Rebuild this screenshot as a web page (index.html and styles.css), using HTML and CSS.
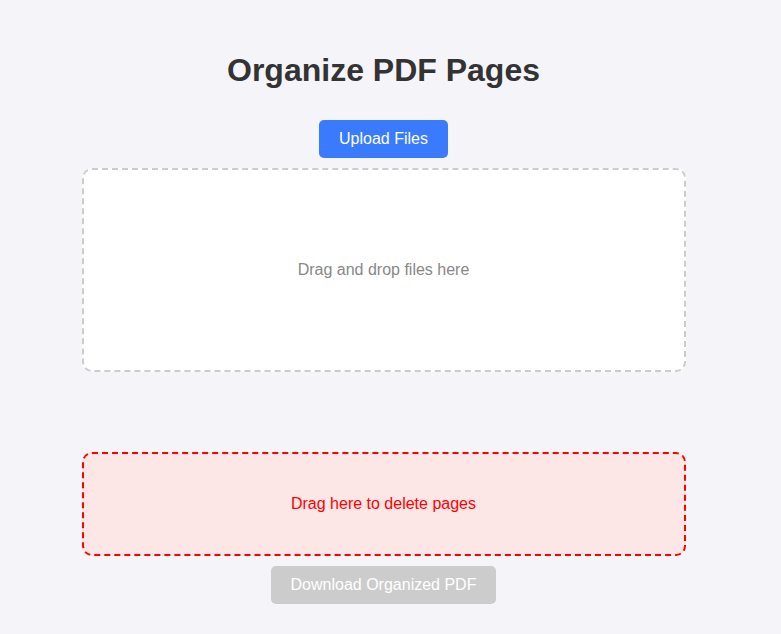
FILE: index.html
```html
<!DOCTYPE html>
<html lang="en">
<head>
<meta charset="utf-8">
<title>Organize PDF Pages</title>
<link rel="stylesheet" href="styles.css">
</head>
<body>
<main class="app">
  <h1 class="title">Organize PDF Pages</h1>
  <button class="btn btn-upload" type="button">Upload Files</button>
  <div class="drop-zone">Drag and drop files here</div>
  <div class="pages"></div>
  <div class="delete-zone">Drag here to delete pages</div>
  <button class="btn btn-download" type="button" disabled>Download Organized PDF</button>
</main>
</body>
</html>
```
FILE: styles.css
```css
html, body {
  margin: 0;
  padding: 0;
}
body {
  background: #f4f4f9;
  font-family: "Liberation Sans", Arial, sans-serif;
  color: #333;
}
.app {
  display: flex;
  flex-direction: column;
  align-items: center;
  padding-right: 14px;
}
.title {
  margin: 52px 0 31px;
  font-size: 32px;
  line-height: 37px;
  font-weight: bold;
  color: #333;
}
.btn {
  font-family: inherit;
  font-size: 16px;
  line-height: 18px;
  padding: 10px 20px;
  border: none;
  border-radius: 5px;
  color: #fff;
}
.btn-upload {
  background: #3a7bfd;
  margin-bottom: 10px;
}
.drop-zone {
  box-sizing: border-box;
  width: 604px;
  height: 204px;
  border: 2px dashed #ccc;
  border-radius: 10px;
  background: #fff;
  color: #888;
  font-size: 16px;
  display: flex;
  align-items: center;
  justify-content: center;
}
.pages {
  height: 80px;
}
.delete-zone {
  box-sizing: border-box;
  width: 604px;
  height: 104px;
  border: 2px dashed red;
  border-radius: 10px;
  background: #fde6e6;
  color: red;
  font-size: 16px;
  display: flex;
  align-items: center;
  justify-content: center;
  margin-bottom: 10px;
}
.btn-download {
  background: #ccc;
}
```
